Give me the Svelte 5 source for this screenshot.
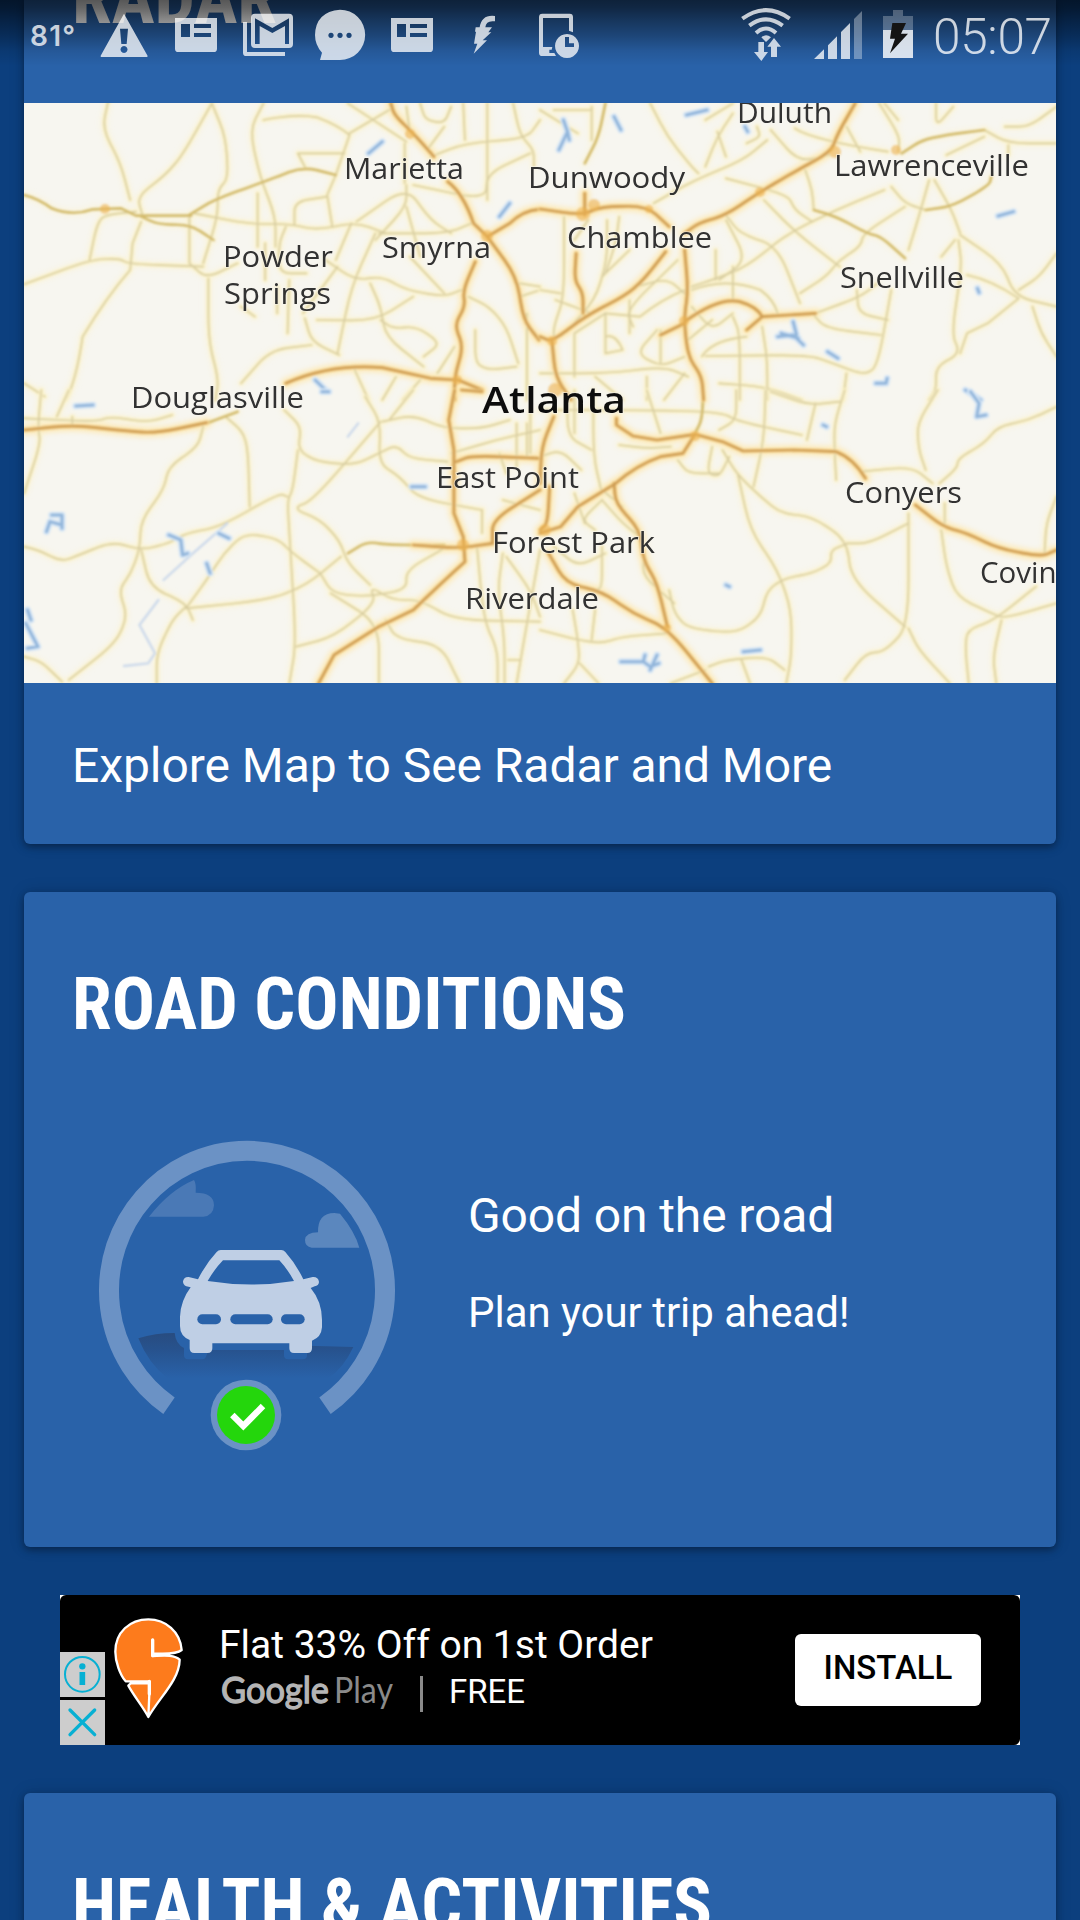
<script>
  // Road geometry is grouped in four map tiles, each with its own local grid.
  const tiles = [
    {
      at: 'translate(0 100) scale(.3444 .3333)',
      minor: [
        'M315 0 L297 85 L350 190 L378 300', 'M615 10 L530 165 L480 225 L398 290 L415 350',
        'M615 10 L655 110 L663 235 L632 270 V350 L590 490', 'M765 10 L725 90 L755 230 L800 350 V440',
        'M765 60 Q860 40 920 52 Q980 75 1015 105 L975 225 L950 285 L965 380', 'M1130 30 L1015 100',
        'M1010 10 L1180 125', 'M865 160 H1000 M865 160 L885 200', 'M550 490 V350 M550 490 L600 535 L690 490',
        'M260 480 L280 380 L300 345 L395 335', 'M410 365 L385 430 L378 510 Q310 590 240 710 Q220 850 190 900',
        'M70 553 L260 480 L345 475 L375 492 L590 500', 'M605 535 V720 L635 840 L625 900',
        'M565 340 L720 372 H840 L920 390 L1035 367 L1120 400', 'M855 375 V305 L950 290', 'M748 280 V440',
        'M770 430 V540', 'M830 380 L810 430 V520 L890 520', 'M885 655 L905 725 L985 765', 'M700 850 L785 750 L905 735',
        'M1035 365 L1180 260 L1250 360 L1310 400', 'M1090 420 L1180 320 V255 M1180 320 L1220 470',
        'M1100 400 H1300 L1380 365', 'M945 480 L1030 540 L1110 530 L1180 570 L1290 590 L1340 570',
        'M1020 370 L975 480 M1090 400 L1020 560 L980 760', 'M920 660 L1090 662 L1200 590 M1075 550 L1105 620 L1120 710 L1230 800',
        'M1105 660 L1140 685 L1210 680 L1280 730 L1230 770', 'M1200 255 L1410 300 L1415 220 L1540 160',
        'M1250 170 L1350 130 L1530 115 L1568 60', 'M1415 10 V300', 'M1345 10 L1350 120', 'M1490 10 L1510 105 L1550 150 V200',
        'M1220 10 L1235 60 L1290 70 L1310 20', 'M1180 20 L1190 100 L1260 170', 'M1190 470 L1290 580',
        'M1360 590 L1420 620 L1470 680 L1505 790', 'M1380 690 V790 L1420 810 L1500 800', 'M1070 900 L1030 810 M1110 900 L1150 830',
        'M1170 900 L1220 840 M1270 820 L1320 740', 'M70 850 L130 890', 'M700 620 L740 650 M880 640 L980 500',
        'M1510 550 L1568 560 M1510 590 L1568 570 M1530 640 V900', 'M805 560 V640 M840 540 L835 700',
        'M1175 130 V250 M1290 80 L1240 150'
      ],
      medium: [
        'M70 285 Q110 295 150 325 Q210 350 270 328 L350 325 L395 347 H555', 'M410 350 L460 373 L555 375 L620 420',
        'M550 345 L620 300 L780 240 L880 200 L975 225'
      ],
      major: [
        'M1135 10 L1145 45 L1200 100 L1260 170', 'M1300 245 Q1345 280 1375 370 L1415 410',
        'M1415 410 L1480 370 Q1520 330 1568 328', 'M1415 410 L1500 530 L1520 660 L1565 720',
        'M1380 485 L1345 570 L1350 620 L1320 675 L1345 740 L1320 830 V900', 'M830 850 Q960 790 1110 803 L1250 835 L1330 840 L1400 870'
      ],
      water: ['M1070 160 L1110 125', 'M915 840 L945 870', 'M1450 350 L1480 310']
    },
    {
      at: 'translate(540 100) scale(.3444 .3333)',
      minor: [
        'M320 10 L370 110 L440 200 L460 220', 'M560 40 L515 110 L480 200 M515 95 L540 170', 'M660 120 L590 180 L440 245 L330 310',
        'M670 90 L750 185 L840 165', 'M740 85 Q790 120 1010 155 M890 80 L930 155', 'M985 10 L1045 110 L1040 155', 'M1200 20 L1150 80 V10',
        'M1350 80 L1420 80 L1500 20', 'M1290 90 L1360 130 H1500', 'M1180 165 L1290 110 M1360 135 V165',
        'M1020 260 L1060 310 L1120 330', 'M1130 240 L1100 350 L1070 450 M1145 240 L1195 330 L1220 400',
        'M540 235 L720 285 L740 330 L790 365', 'M770 210 L790 270 L795 330', 'M650 300 L740 395 L870 500', 'M540 345 L580 400 L690 440 L755 610',
        'M440 560 L500 540 L600 500 L720 400 L860 330 L1000 270', 'M540 360 L600 480 L520 540', 'M1060 320 L940 400 L930 440 L870 480 L830 530 L755 580',
        'M1220 405 L1340 490 L1380 590 L1500 620', 'M1205 420 L1165 470 M1215 420 L1225 500 L1195 700 L1220 760 L1150 800 V870 L1130 900',
        'M1240 525 Q1310 540 1390 595 L1300 670 L1240 700 L1220 760', 'M1390 570 L1450 530 L1500 460', 'M1430 620 L1455 700 L1500 770',
        'M1020 570 L980 800 L940 825 L850 790 L780 765 L480 768', 'M790 640 L830 685 L990 705', 'M920 570 L925 640 L1010 660',
        'M800 640 L930 590 L980 550', 'M440 570 Q540 530 640 570 Q680 600 690 640', 'M560 500 V600 M560 650 L580 700 V900',
        'M645 680 L660 780 V900', 'M470 770 Q500 720 600 710', 'M520 850 L650 860 L760 900', 'M890 820 L880 900',
        'M70 350 V590 L40 680 V720', 'M195 360 V480 L160 600 L70 700', 'M230 350 L220 430 L190 520 M260 450 L180 530',
        'M400 480 L250 630 L270 680', 'M420 570 Q350 600 290 650 L190 640 L100 700 V830', 'M190 640 V760 L240 750 Q220 700 190 710',
        'M340 690 L280 760 L350 800 L420 770', 'M0 820 H200 L360 800 L430 830', 'M160 830 L240 900 M310 830 V900 M420 820 L360 900',
        'M440 620 L500 690 L560 640', 'M430 720 L500 660 M510 450 V540 M150 20 L150 120', 'M0 30 L110 100 M40 30 L150 30',
        'M1000 10 L1040 60', 'M560 10 L480 60 M630 80 L640 110 L600 130', 'M140 360 L100 420 M0 570 L60 580 M45 600 L150 640',
        'M280 560 L370 535 L430 590', 'M350 690 V790 M260 600 V700'
      ],
      medium: ['M795 330 L860 350 L950 400 L990 410 L1060 475', 'M1050 160 L1110 120 L1180 105 L1290 90', 'M1120 330 L1200 318 L1305 255 L1310 230', 'M190 10 L170 110 L130 190'],
      major: [
        'M915 10 L865 100 L845 155 L740 215 L640 275 L540 345 L460 370 L420 400', 'M0 327 L120 345 L180 320 L310 318 L375 380',
        'M130 345 L130 280', 'M420 450 L430 570 L418 660 L430 770 L470 830 L475 900', 'M365 455 L300 540 L250 585 L130 650 L35 725 L0 710',
        'M105 460 L100 540 L125 580 V640', 'M35 725 L45 830 L90 900', 'M420 665 Q520 590 580 605 Q630 620 645 650 L800 640',
        'M645 650 L600 690', 'M350 705 L420 670'
      ],
      water: ['M68 60 L80 95 L55 150 M80 95 L85 120', 'M215 50 L235 90', 'M425 45 L485 30', 'M595 80 L603 95', 'M690 710 L735 705 L765 735 M735 665 L745 705 M700 700 L750 715', 'M1330 348 L1375 335', 'M835 755 L865 775', 'M975 850 H1005 L1008 835', 'M1235 870 L1280 900', 'M1270 565 L1275 578']
    },
    {
      at: 'translate(0 390) scale(.3444 .3333)',
      minor: [
        'M70 85 L280 95 L320 80 L430 97 L500 75', 'M120 0 L110 110 L118 160 L70 310', 'M200 0 L165 80 M210 80 V110',
        'M590 110 L575 170 L490 230 L475 300 L410 390 L405 480 L380 550 L345 600 L370 680 L335 760 L200 870',
        'M655 80 L705 125 L720 180 L725 350', 'M70 470 L110 480 L180 515 L230 495 L325 455 L410 480 L490 460 L540 430 L640 410 L810 310 L835 320',
        'M825 60 L875 110 L865 180 L920 215 L1030 225 L1100 190 L1150 165 L1190 205 L1300 215', 'M865 180 L850 300 L835 330 L840 430 L860 760 L840 880',
        'M1060 20 L1105 95 L1100 220 L1160 260 L1215 325 L1400 360', 'M1105 95 L910 330 L850 355 L930 390 L985 450 L1010 520 L1075 585',
        'M540 655 L600 570 L650 490 L710 430 L805 445 L850 490 L930 550', 'M410 480 L435 590 L540 640 L560 690', 'M540 650 L500 690 L455 790 V880',
        'M540 655 L780 630 L890 585 L990 500', 'M930 550 L965 610 L1060 620 L1180 600 V540 L1290 475', 'M960 610 L1100 700 L1100 880', 'M860 770 L970 740 L1090 640 L1075 590 L1140 630 H1220 L1320 690 L1568 695',
        'M1120 690 L1150 745 L1280 765 L1335 880', 'M70 800 L120 815 L180 875', 'M1385 470 L1405 690 L1445 780 V880', 'M1460 490 L1445 600 L1465 750 V880',
        'M1470 500 L1540 600 L1568 680 M1568 480 L1530 700 L1500 880 M1475 810 H1510', 'M1130 90 L1200 0 M1110 95 L1200 75 L1290 115 H1400 L1480 90',
        'M1310 190 L1440 150 L1568 120 M1530 100 V200', 'M1400 360 V430 M1450 190 L1470 250', 'M1460 330 L1568 360', 'M1500 100 V230 M1540 60 V190'
      ],
      medium: ['M600 100 L690 65', 'M1010 490 L1065 455 L1130 465 H1290'],
      major: [
        'M70 120 L210 105 L340 120 L450 130 L600 98', 'M1320 0 L1303 90 L1318 180 V370 L1345 440 L1350 515 Q1280 580 1200 660 L1100 710 L970 795 L925 880',
        'M1200 465 L1330 475 L1430 460', 'M1325 215 L1370 197 L1568 205', 'M1430 460 L1430 390 L1568 300', 'M1340 0 L1400 5'
      ],
      water: ['M135 425 L145 395 L180 405 M150 375 H180 V415', 'M75 700 L110 770 L80 775 M80 660 L90 690', 'M220 48 L270 45', 'M490 435 L525 450 L530 495 L545 490', 'M635 430 L665 445', 'M1195 290 H1235', 'M600 520 L610 550', 'M935 5 H955'],
      stream: ['M660 400 L560 490 L475 570', 'M460 630 L405 705 L450 790 L430 820 L360 828', 'M1040 100 L1010 140']
    },
    {
      at: 'translate(540 390) scale(.3444 .3333)',
      minor: [
        'M155 0 V200 L180 310', 'M0 60 L250 60 L520 65 L580 95 L760 135', 'M310 0 L350 130', 'M570 0 V90 L520 120', 'M655 0 L650 150 L620 290',
        'M670 5 L780 45 L870 35 M800 40 L775 150 M885 0 L855 100 V180 L860 270', 'M1155 0 L1095 100 L1100 180 L1120 240',
        'M930 245 L1080 230 L1140 280', 'M1160 280 L1210 235 L1215 205 L1290 160 L1330 110 L1420 90 L1500 50',
        'M500 170 L485 250 L520 260 L550 200', 'M530 180 L570 250 L640 320 L700 370 L790 380 L890 450 L905 570 L1060 710',
        'M575 255 L610 420 L690 540 L730 660 V800 L715 880', 'M400 210 L430 250 L520 250', 'M890 460 L955 460 L1070 400', 'M890 462 L845 480 V520 L790 550 L710 565 L660 600 L640 680 L570 730 L430 715 L390 670 L375 600',
        'M1070 370 V710 L1000 785 L945 790 L885 870', 'M1070 715 L1100 780 L1190 880', 'M1165 420 L1180 530 L1210 620 L1310 670 L1350 685 L1500 640',
        'M1175 340 V400 M1500 320 L1470 400 L1465 490', 'M1440 590 L1320 690 L1240 720 L1235 780 L1245 880', 'M1340 690 L1315 800 L1325 880',
        'M0 720 L110 750 L180 760 L240 740 L370 730', 'M95 660 L110 750 L115 820 L70 880 M115 820 L170 880', 'M160 660 L150 750',
        'M490 830 L540 810 L660 800 L710 840', 'M585 810 L610 880', 'M380 880 L480 840', 'M240 350 L180 300 M180 330 L240 400 L290 440',
        'M180 330 L120 390 L160 420', 'M100 310 L130 400 M40 470 L110 530 L190 490', 'M180 470 V590 L165 600', 'M80 10 V140 L150 180 M0 200 L60 180 L120 240',
        'M300 500 L300 560 L390 640', 'M230 165 L310 175 L380 170', 'M100 0 V130'
      ],
      medium: ['M475 0 L470 90 L450 130'],
      major: [
        'M222 85 V105 L270 138 L340 150 L450 133 L530 155 L590 183 L740 180 L860 185 Q910 205 945 265', 'M450 133 L415 190 L350 200 Q280 225 220 280 L110 350 L60 410 L0 430',
        'M215 280 L220 340 L290 420 L300 510 L340 580 L370 710', 'M25 490 L75 580 L180 605 L270 670 L370 715 L500 880',
        'M1090 345 L1170 410 L1240 430 L1330 475 L1455 500 L1500 480', 'M40 80 L5 170 L0 280', 'M28 290 L22 400 L0 420'
      ],
      water: ['M1250 5 L1275 40 L1268 80 L1295 75', 'M235 815 L300 815 L320 830 L345 820 M300 815 L305 795 M320 840 L340 795', 'M540 585 L550 590', 'M822 105 L832 110', 'M590 785 L640 780']
    }
  ];

  // Rounds the corners of a polyline; paths that already hold curves pass unchanged.
  function smooth(d) {
    if (d.includes('Q')) return d;
    return d
      .split('M')
      .filter((s) => s.trim())
      .map((sub) => {
        const pts = [];
        for (const [, cmd, args] of ('L' + sub).matchAll(/([LHV])\s*([\d\s.]+)/g)) {
          const n = args.trim().split(/\s+/).map(Number);
          const last = pts[pts.length - 1];
          if (cmd === 'H') pts.push([n[0], last[1]]);
          else if (cmd === 'V') pts.push([last[0], n[0]]);
          else pts.push([n[0], n[1]]);
        }
        const mix = (a, b, t) => [a[0] + (b[0] - a[0]) * t, a[1] + (b[1] - a[1]) * t].map((v) => v.toFixed(1)).join(' ');
        let out = `M${pts[0].join(' ')}`;
        for (let i = 1; i < pts.length - 1; i++) {
          out += `L${mix(pts[i], pts[i - 1], 0.42)}Q${pts[i].join(' ')} ${mix(pts[i], pts[i + 1], 0.42)}`;
        }
        return out + `L${pts[pts.length - 1].join(' ')}`;
      })
      .join('');
  }

  const roads = tiles.map((t) => ({
    ...t,
    minor: t.minor.map(smooth),
    medium: t.medium.map(smooth),
    major: t.major.map(smooth)
  }));

  const places = [
    ['Duluth', 737, 123, 95], ['Marietta', 344, 179, 120], ['Dunwoody', 528, 188, 157],
    ['Lawrenceville', 834, 176, 195], ['Powder', 223, 267, 110], ['Springs', 224, 304, 107],
    ['Smyrna', 382, 258, 109], ['Chamblee', 567, 248, 145], ['Snellville', 840, 288, 124],
    ['Douglasville', 131, 408, 173], ['East Point', 436, 488, 143], ['Forest Park', 492, 553, 163],
    ['Riverdale', 465, 609, 134], ['Conyers', 845, 503, 117], ['Covington', 980, 583, 139]
  ];

  const hubs = [[410, 134, 5], [487, 236, 6], [583, 214, 7], [594, 205, 6], [649, 209, 4], [835, 152, 6], [760, 192, 5], [684, 321, 5], [552, 341, 5], [555, 390, 7], [463, 545, 6], [545, 530, 6], [667, 628, 4], [695, 436, 5], [457, 380, 5], [105, 209, 5], [896, 150, 5]];
</script>

<main class="screen">
  <section class="card radar">
    <svg class="title cut" width="960" height="30"><text x="0" y="23" textLength="205" lengthAdjust="spacingAndGlyphs">RADAR</text></svg>
    <svg class="map" viewBox="24 103 1032 580" width="1032" height="580">
      <defs>
        <filter id="soft"><feGaussianBlur stdDeviation="0.9" /></filter>
        <filter id="wash" x="-20%" y="-20%" width="140%" height="140%"><feGaussianBlur stdDeviation="2.600" /></filter>
        <filter id="ink"><feGaussianBlur stdDeviation="0.6" /></filter>
      </defs>
      <rect x="24" y="103" width="1032" height="580" fill="#f7f6f0" />
      <g filter="url(#wash)">
        {#each roads as t}
          <g transform={t.at} class="halo">
            {#each [...t.minor, ...t.medium] as d}<path {d} />{/each}
            {#each t.major as d}<path class="wide" {d} />{/each}
          </g>
        {/each}
      </g>
      <g filter="url(#soft)">
        {#each roads as t}
          <g transform={t.at}>
            {#each t.minor as d}<path class="minor-edge" {d} />{/each}
            {#each t.minor as d}<path class="minor" {d} />{/each}
            {#each t.medium as d}<path class="medium" {d} />{/each}
            {#each t.stream ?? [] as d}<path class="stream" {d} />{/each}
            {#each t.water as d}<path class="water-edge" {d} />{/each}
            {#each t.water as d}<path class="water" {d} />{/each}
          </g>
        {/each}
        {#each roads as t}
          <g transform={t.at}>
            {#each t.major as d}<path class="major-edge" {d} />{/each}
            {#each t.major as d}<path class="major" {d} />{/each}
          </g>
        {/each}
        {#each hubs as [cx, cy, r]}<circle {cx} {cy} {r} class="hub" />{/each}
      </g>
      <g filter="url(#ink)" class="labels">
        {#each places as [name, x, y, w]}
          <text {x} {y} textLength={w} lengthAdjust="spacingAndGlyphs">{name}</text>
        {/each}
        <text class="city" x="482" y="413" textLength="144" lengthAdjust="spacingAndGlyphs">Atlanta</text>
      </g>
    </svg>
    <p class="explore">Explore Map to See Radar and More</p>
  </section>

  <section class="card road">
    <svg class="title" width="960" height="90"><text x="0" y="78" textLength="554" lengthAdjust="spacingAndGlyphs">ROAD CONDITIONS</text></svg>
    <div class="road-row">
      <svg viewBox="0 0 1020 1050" width="340" height="350">
        <defs>
          <linearGradient id="ground" x1="0" y1="639" x2="0" y2="775" gradientUnits="userSpaceOnUse">
            <stop offset="0" stop-color="#284c80" /><stop offset=".35" stop-color="#27528d" /><stop offset="1" stop-color="#2962a9" />
          </linearGradient>
        </defs>
        <path d="M267 857A414 419 0 1 1 735 857" fill="none" stroke="#6b92c5" stroke-width="60" />
        <path d="M207 290Q270 210 342 180Q349 190 347 218Q402 218 402 256Q400 288 370 290Z" fill="#4a79b6" />
        <path d="M695 383Q675 380 675 360Q677 337 714 337Q713 279 763 279L780 281Q825 335 838 383Z" fill="#5b87be" />
        <path d="M175 655Q225 639 284 639Q287 672 312 684V705Q312 718 325 718H368Q380 718 383 690H612V705Q612 718 625 718H668Q681 718 681 705V677L820 681Q790 745 745 775H262Q205 730 175 655Z" fill="url(#ground)" />
        <path fill="#bfcfe5" fill-rule="evenodd" d="M422 390H604Q611 390 616 396Q648 432 670 478L698 471Q715 470 717 486Q716 497 704 499L692 504Q726 545 726 600V622Q724 652 696 662V685Q696 699 682 699H642Q628 699 628 685V670H397V685Q397 699 383 699H343Q329 699 329 685V660Q300 648 300 618V590Q302 542 332 502L319 499Q309 495 309 484Q312 470 326 471L354 478Q378 430 410 396Q415 390 422 390ZM429 421Q402 449 383 483Q515 504 642 483Q624 449 598 421Z" />
        <g fill="#2962a9"><rect x="352" y="583" width="71" height="30" rx="15" /><rect x="451" y="583" width="127" height="30" rx="15" /><rect x="603" y="583" width="71" height="30" rx="15" /></g>
        <circle cx="498" cy="885" r="106" fill="#6b92c5" /><circle cx="498" cy="885" r="87" fill="#24d60c" />
        <path d="M457 885L490 918L549 858" fill="none" stroke="#fff" stroke-width="19" />
      </svg>
      <div class="road-text">
        <p class="good">Good on the road</p>
        <p class="plan">Plan your trip ahead!</p>
      </div>
    </div>
  </section>

  <section class="ad">
    <div class="ad-body">
      <div class="ad-tools">
        <svg viewBox="60 216 135 135" width="45" height="45"><rect x="60" y="216" width="135" height="135" fill="#cdcdcd" /><circle cx="127" cy="283" r="52" fill="none" stroke="#07b0d3" stroke-width="6" /><circle cx="127" cy="259" r="9.500" fill="#07b0d3" /><path d="M127 276V315" stroke="#07b0d3" stroke-width="17" /></svg>
        <svg viewBox="60 360 135 135" width="45" height="45"><rect x="60" y="360" width="135" height="135" fill="#cdcdcd" /><path d="M90 390L164 464M164 390L90 464" stroke="#07b0d3" stroke-width="10" stroke-linecap="round" /></svg>
      </div>
      <svg class="brand" viewBox="219 45 216 450" width="72" height="150">
        <path d="M325 411C310 382 283 350 265 317L272 310H328V342M328 342V304H257C240 285 226 245 226 215C226 157 269 118 325 118C377 118 421 155 425 210C410 223 372 222 338 220V180V228C370 227 402 223 419 239C418 300 360 350 325 411Z" fill="#fd7b1c" stroke="#fff" stroke-width="7" stroke-linejoin="round" />
        <path d="M338 180V227M328 304V342" stroke="#fff" stroke-width="10" stroke-linecap="round" />
      </svg>
      <div class="ad-copy">
        <p class="offer">Flat 33% Off on 1st Order</p>
        <div class="store">
          <svg width="177" height="44"><text class="google" x="0" y="33" textLength="108" lengthAdjust="spacingAndGlyphs">Google</text><text class="play" x="113" y="33" textLength="59" lengthAdjust="spacingAndGlyphs">Play</text></svg>
          <i></i><span>FREE</span>
        </div>
      </div>
      <button>INSTALL</button>
    </div>
  </section>

  <section class="card health">
    <svg class="title" width="960" height="100"><text x="0" y="78" textLength="640" lengthAdjust="spacingAndGlyphs">HEALTH &amp; ACTIVITIES</text></svg>
  </section>
</main>

<header class="status">
  <svg class="temp" width="88" height="76"><text x="30" y="46" textLength="45">81°</text></svg>
  <svg viewBox="264 0 216 228" width="72" height="76"><path fill-rule="evenodd" d="M372 41L443 168Q443 171 440 171H304Q301 171 302 167ZM360 86L364 132H380L384 86ZM372 138A10.500 10.500 0 1 0 372.100 138Z" /></svg>
  <svg viewBox="480 0 216 228" width="72" height="76"><path fill-rule="evenodd" d="M525 54H651V146Q651 156 641 156H535Q525 156 525 146ZM543 72V111H570V72ZM582 72V84H633V72ZM582 99V111H633V99Z" /></svg>
  <svg viewBox="696 0 216 228" width="72" height="76"><path fill-rule="evenodd" d="M765 41H867Q879 41 879 53V132Q879 144 867 144H765Q753 144 753 132V53Q753 41 765 41ZM765 55V132H779V78L817 99L855 78V132H867V55L817 84Z" /><path d="M729 66H741V156H855V168H739Q729 168 729 158Z" /></svg>
  <svg viewBox="912 0 216 228" width="72" height="76"><path fill-rule="evenodd" d="M1020 29A75 75 0 1 1 1020 180H960L966 158Q945 135 945 105Q947 35 1020 29ZM993 98A8 8 0 1 0 993.100 98ZM1020 98A8 8 0 1 0 1020.100 98ZM1047 98A8 8 0 1 0 1047.100 98Z" /></svg>
  <svg viewBox="480 0 216 228" width="72" height="76"><path fill-rule="evenodd" d="M525 54H651V146Q651 156 641 156H535Q525 156 525 146ZM543 72V111H570V72ZM582 72V84H633V72ZM582 99V111H633V99Z" /></svg>
  <svg viewBox="324 0 216 228" width="72" height="76"><path d="M465 48V64Q438 60 436 82H456L445 97H454L428 121H441L401 161L412 131H402L408 95H405L407 82H419Q425 43 465 48Z" /></svg>
  <svg viewBox="540 0 216 228" width="72" height="76"><path d="M607 41H689Q699 41 699 51V97L687 92V54H609V141H637L635 149H628V159H643L648 168H607Q597 168 597 158V51Q597 41 607 41Z" /><path fill-rule="evenodd" d="M681 102A36 36 0 1 0 681.100 102ZM675 111H687V130H702V141H675Z" /></svg>
  <span class="gap"></span>
  <svg viewBox="48 0 180 228" width="60" height="76">
    <g fill="none" stroke="#fff" stroke-width="12"><path d="M67 56Q138 5 209 56" /><path d="M88 77Q138 39 188 77" /><path d="M108 99Q138 72 168 99" /></g>
    <path d="M124 112Q138 99 153 112L138 126ZM115 126H132V156H144L124 183L102 156H115ZM162 114L183 140H171V171H153V140H142Z" />
  </svg>
  <svg viewBox="264 0 180 228" width="60" height="76"><path d="M282 177L312 148V177ZM324 177V136L351 109V177ZM363 177V96L390 69V177Z" /><path opacity=".45" d="M402 177V57L426 33V177Z" /></svg>
  <svg class="battery" viewBox="468 0 132 228" width="44" height="76">
    <path opacity=".26" d="M519 30H549V48H579V90H489V48H519Z" /><path opacity=".82" d="M489 90H579V174H489Z" />
    <path fill="#141414" d="M517 69H558L543 101H564L510 160L525 116H510Z" />
  </svg>
  <time>05:07</time>
</header>

<style>
  :global(body) { margin: 0; background: #0c3f7e; overflow: hidden; }
  p { margin: 0; }
  svg { display: block; flex: none; }
  .screen { width: 1080px; height: 1920px; box-sizing: border-box; padding: 0 24px; overflow: hidden; background: #0c3f7e; color: #fff; font-family: Roboto, sans-serif; display: flex; flex-direction: column; }
  .card { flex: none; box-sizing: border-box; background: #2962a9; border-radius: 6px; box-shadow: 0 3px 7px rgba(0, 0, 0, .32), 0 0 16px rgba(0, 0, 0, .15); }
  .title { margin-left: 48px; fill: #fff; font: 700 73px "Roboto Condensed", Roboto, sans-serif; }
  .radar { height: 844px; border-radius: 0 0 6px 6px; }
  .cut { padding-bottom: 73px; }
  .explore { padding: 55px 48px 0; font-size: 48px; line-height: 56px; letter-spacing: -.06px; white-space: nowrap; }
  .road { height: 655px; margin-top: 48px; padding-top: 59px; }
  .road-row { display: flex; padding: 79px 0 0 56px; }
  .road-text { padding: 68px 0 0 48px; white-space: nowrap; }
  .good { font-size: 48px; line-height: 56px; letter-spacing: -.12px; }
  .plan { font-size: 42px; line-height: 50px; padding-top: 44px; letter-spacing: -.03px; }
  .ad { flex: none; width: 960px; height: 150px; margin: 48px 36px; background: #fff; }
  .ad-body { height: 150px; display: flex; background: #000; border-radius: 6px 6px 6px 0; }
  .ad-tools { display: flex; flex-direction: column; gap: 3px; padding-top: 57px; width: 45px; }
  .brand { margin-left: 8px; }
  .ad-copy { width: 576px; padding: 27px 0 0 34px; white-space: nowrap; }
  .offer { font-size: 39px; line-height: 46px; }
  .store { display: flex; align-items: flex-start; padding: 2px 0 0 2px; font-size: 33px; line-height: 40px; }
  .store i { width: 3px; height: 36px; margin: 6px 26px 0 22px; background: #8a8a8a; }
  .store span { padding-top: 2px; }
  .google { font: 400 37px Lato, sans-serif; fill: #b5b5b5; stroke: #b5b5b5; stroke-width: 1.300px; }
  .play { font: 400 36px Lato, sans-serif; fill: #8a8a8a; }
  button { width: 186px; height: 72px; margin: 39px 0 0; padding: 0 0 5px; border: 0; border-radius: 6px; background: #fff; color: #000; font: 500 33px Roboto, sans-serif; }
  .health { height: 200px; padding-top: 59px; }

  .map path { fill: none; stroke-linecap: round; stroke-linejoin: round; }
  .halo path { stroke: #fcf4d2; stroke-width: 22px; opacity: .6; }
  .halo .wide { stroke: #fdeab8; stroke-width: 32px; opacity: .9; }
  .minor-edge { stroke: #fbf2c9; stroke-width: 12px; }
  .minor { stroke: #d8cda0; stroke-width: 5px; }
  .medium { stroke: #d3bb6d; stroke-width: 8px; }
  .major-edge { stroke: #f8d894; stroke-width: 14px; }
  .major { stroke: #cf9d52; stroke-width: 8px; }
  .hub { fill: #ecb352; opacity: .6; }
  .map .water-edge { stroke: #d6e6f5; stroke-width: 20px; }
  .map .water { stroke: #86add6; stroke-width: 9px; opacity: .85; }
  .map .stream { stroke: #ccd9ea; stroke-width: 7px; }
  .labels { font: 400 30px "Open Sans", "Noto Sans", sans-serif; fill: #303030; stroke: #f7f6f0; stroke-opacity: .5; stroke-width: 2px; paint-order: stroke; }
  .city { font-size: 36px; font-weight: 600; fill: #111; }

  .status { position: absolute; top: 0; left: 0; width: 1080px; height: 76px; display: flex; background: linear-gradient(rgba(0, 0, 0, .66) 0, rgba(0, 0, 0, .6) 8px, rgba(0, 0, 0, .46) 20px, rgba(0, 0, 0, .29) 36px, rgba(0, 0, 0, .1) 51px, rgba(0, 0, 0, 0) 66px); }
  .status svg { fill: #fff; opacity: .76; }
  .status .gap { width: 144px; }
  .status svg.battery { opacity: 1; }
  .temp { font: 600 28px Inter, sans-serif; }
  .status .gap + svg + svg { margin-left: 12px; }
  .status .gap + svg + svg + svg { margin-left: 8px; }
  time { padding: 8px 0 0 13px; font: 300 49.500px/58px Roboto, sans-serif; letter-spacing: -.3px; color: rgba(255, 255, 255, .78); white-space: nowrap; }
</style>
